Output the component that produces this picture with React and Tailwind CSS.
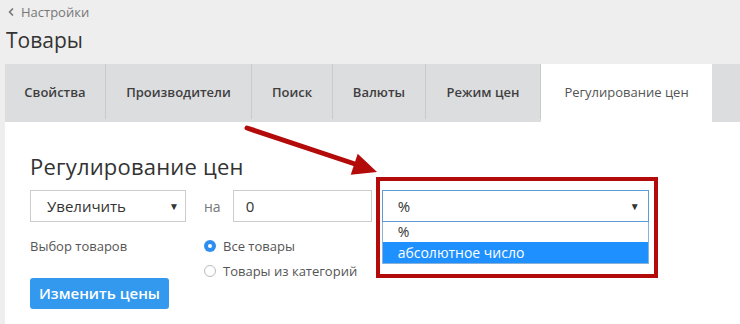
import { ChevronLeft } from 'lucide-react';

const tabs = [
  { label: 'Свойства', w: 'w-[101px]' },
  { label: 'Производители', w: 'w-[146px]' },
  { label: 'Поиск', w: 'w-[81px]' },
  { label: 'Валюты', w: 'w-[93px]' },
  { label: 'Режим цен', w: 'w-[115px]' },
];

function App() {
  return (
    <div className="relative w-[740px] h-[324px] overflow-hidden bg-[#eeeeee] flex flex-col font-['Open_Sans',sans-serif] text-[#333]">
      {/* Breadcrumb + title */}
      <div className="px-[6px] pt-[3px] h-[64px]">
        <div className="flex items-center gap-[4px] text-[13px] leading-[18px] text-[#777]">
          <ChevronLeft className="w-[12px] h-[12px] -ml-[1px]" strokeWidth={3.5} />
          <span>Настройки</span>
        </div>
        <h1 className="mt-[5px] text-[21px] leading-[28px] font-normal text-[#333]">Товары</h1>
      </div>

      {/* Tabs */}
      <div className="ml-[5px] h-[58px] flex bg-[#dcdddf]">
        {tabs.map((t) => (
          <div key={t.label} className={`${t.w} h-[55px] flex items-center justify-center border-r border-[#c9cacc] text-[13px] font-semibold text-[#3f3f3f] pt-[3px]`}>
            {t.label}
          </div>
        ))}
        <div className="w-[171px] h-[58px] bg-white flex items-center justify-center text-[13px] text-[#555]">
          Регулирование цен
        </div>
      </div>

      {/* Panel */}
      <div className="ml-[5px] flex-1 bg-white pl-[25px] pt-[28px]">
        <h2 className="text-[22px] leading-[32px] font-normal text-[#333] tracking-[0.2px]">Регулирование цен</h2>

        <div className="mt-[8px] flex items-center h-[32px]">
          <div className="w-[156px] h-[32px] border border-[#cccccc] flex items-center justify-between pl-[16px] pr-[6px] text-[15px] text-[#333]">
            <span>Увеличить</span>
            <span className="text-[10px] text-[#333]">▼</span>
          </div>
          <span className="ml-[18px] text-[14px] text-[#777]">на</span>
          <div className="ml-[12px] w-[139px] h-[32px] border border-[#cccccc] flex items-center pl-[12px] text-[15px] text-[#333]">0</div>
          <div className="relative ml-[10px] w-[267px] h-[32px]">
            <div className="w-full h-full border border-[#5e9bd6] flex items-center justify-between pl-[15px] pr-[8px] text-[15px] text-[#333]">
              <span>%</span>
              <span className="text-[10px] text-[#333]">▼</span>
            </div>
            <div className="absolute left-0 top-[32px] w-full border border-[#8ab0d8] border-t-0 bg-white text-[14px] z-10">
              <div className="h-[20px] leading-[20px] pl-[15px] text-[#333]">%</div>
              <div className="h-[21px] leading-[21px] pl-[15px] bg-[#1e90ff] text-white">абсолютное число</div>
            </div>
            <div className="absolute -left-[6px] -top-[13px] w-[282px] h-[101px] border-[4px] border-[#b30a0a] z-20 pointer-events-none" />
          </div>
        </div>

        <div className="mt-[14px] flex">
          <div className="w-[174px] text-[13px] leading-[20px] text-[#555]">Выбор товаров</div>
          <div className="flex flex-col gap-[5px] text-[13px] leading-[20px] text-[#555]">
            <label className="flex items-center gap-[7px]">
              <span className="w-[12px] h-[12px] rounded-full bg-[#2e8ff0] flex items-center justify-center">
                <span className="w-[4px] h-[4px] rounded-full bg-white" />
              </span>
              Все товары
            </label>
            <label className="flex items-center gap-[7px]">
              <span className="w-[12px] h-[12px] rounded-full border border-[#bbbbbb] bg-white" />
              Товары из категорий
            </label>
          </div>
        </div>

        <button className="-mt-[10px] w-[139px] h-[31px] rounded-[3px] bg-[#3399ee] text-white text-[15px] font-semibold">
          Изменить цены
        </button>
      </div>

      {/* Annotation arrow */}
      <svg className="absolute left-0 top-0 pointer-events-none z-30" width="740" height="324" viewBox="0 0 740 324">
        <line x1="247" y1="128" x2="358" y2="165" stroke="#b30a0a" strokeWidth="5" strokeLinecap="round" />
        <polygon points="377,172 350.7,174.7 357.7,153.8" fill="#b30a0a" />
      </svg>
    </div>
  );
}

export default App;
